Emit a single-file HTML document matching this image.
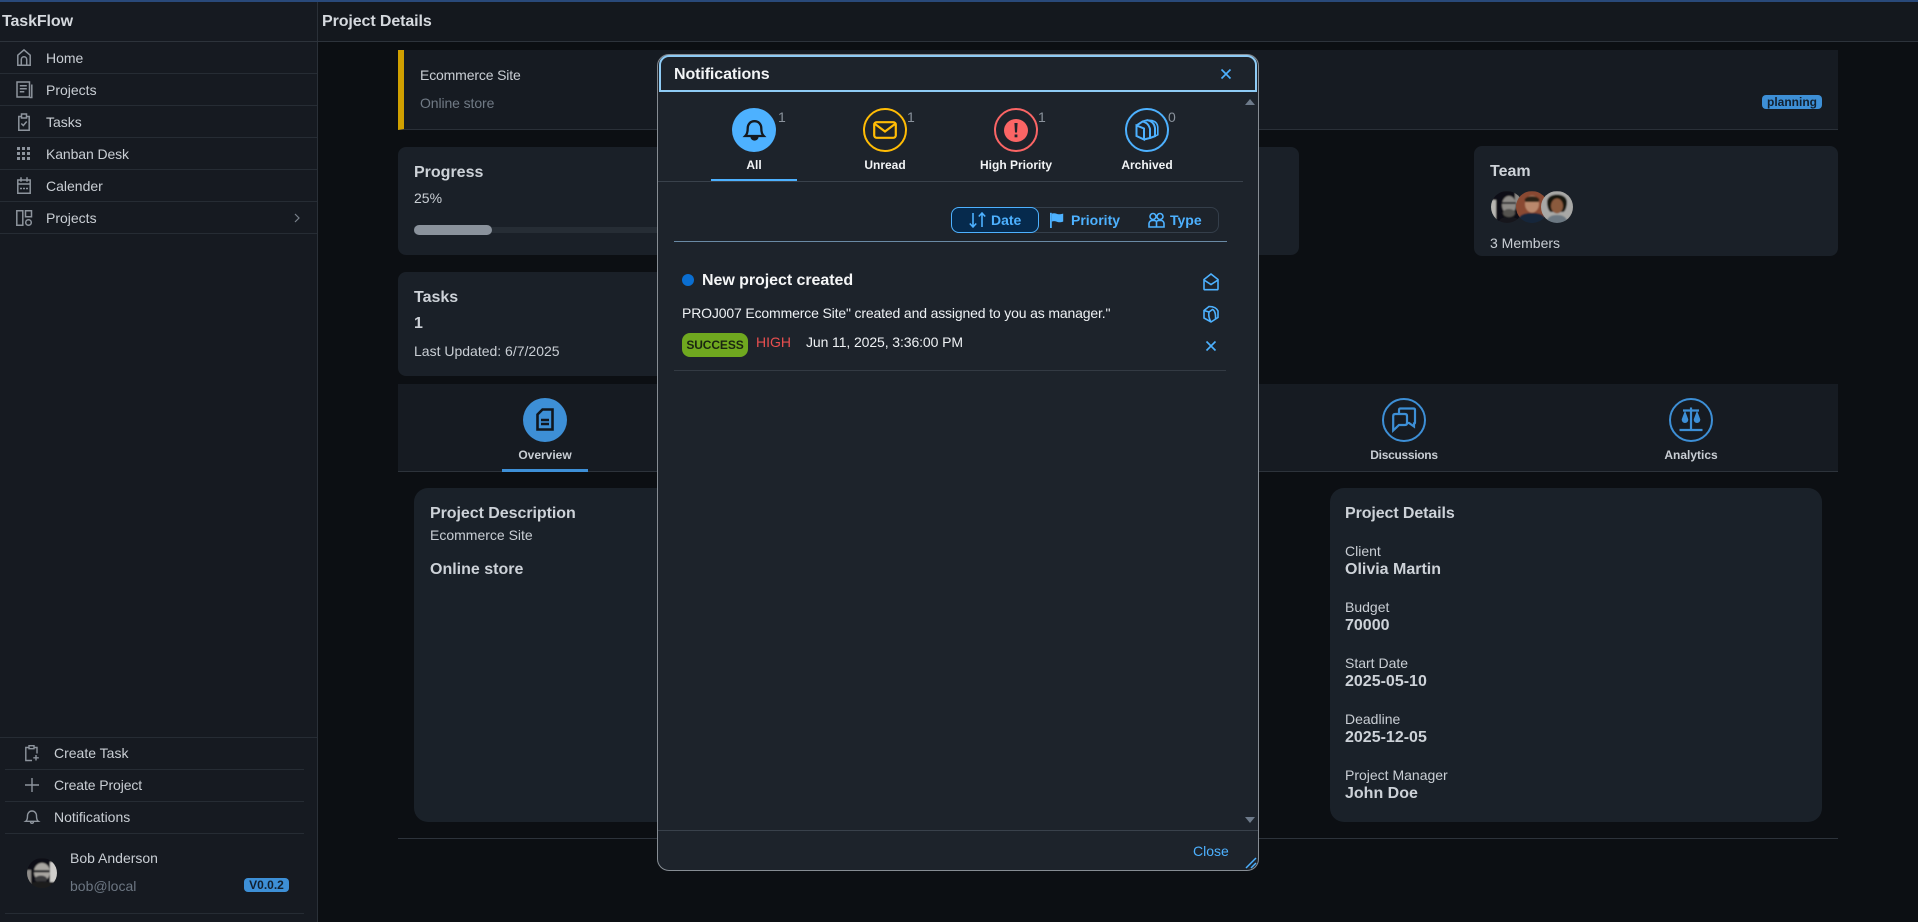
<!DOCTYPE html>
<html><head><meta charset="utf-8"><title>Project Details</title>
<style>
html,body{margin:0;padding:0;width:1918px;height:922px;overflow:hidden;background:#0c0f13}
body{position:relative;font-family:"Liberation Sans",sans-serif;font-size:14px;color:#c9ced4}
.r{position:absolute;box-sizing:border-box}
.t{position:absolute;white-space:nowrap;line-height:20px;height:20px}
.b{font-weight:700}
.h{font-size:16px;font-weight:700;color:#cdd2d8}
.w{color:#f2f4f6}
svg.i{position:absolute;overflow:visible;fill:none}
.c{transform:translateX(-50%)}
.s{font-size:12px;font-weight:700;text-align:center}
</style></head><body>

<!-- sidebar & header -->
<div class="r" style="left:0;top:0;width:317px;height:922px;background:#161a21"></div>
<div class="r" style="left:317px;top:0;width:1px;height:922px;background:#2a3038"></div>
<div class="r" style="left:318px;top:0;width:1600px;height:41px;background:#14181e"></div>
<div class="r" style="left:0;top:0;width:1918px;height:2px;background:#29497a"></div>
<div class="r" style="left:0;top:41px;width:1918px;height:1px;background:#2d333b"></div>
<div class="t h" style="left:2px;top:12px;color:#d5d9de;letter-spacing:-.1px">TaskFlow</div>
<div class="t h" style="left:322px;top:12px;color:#d5d9de;letter-spacing:-.1px">Project Details</div>

<div class="r" style="left:0;top:73px;width:317px;height:1px;background:#262c34"></div>
<div class="r" style="left:0;top:105px;width:317px;height:1px;background:#262c34"></div>
<div class="r" style="left:0;top:137px;width:317px;height:1px;background:#262c34"></div>
<div class="r" style="left:0;top:169px;width:317px;height:1px;background:#262c34"></div>
<div class="r" style="left:0;top:201px;width:317px;height:1px;background:#262c34"></div>
<div class="r" style="left:0;top:233px;width:317px;height:1px;background:#262c34"></div>

<div class="t" style="left:46px;top:48px">Home</div>
<div class="t" style="left:46px;top:80px">Projects</div>
<div class="t" style="left:46px;top:112px">Tasks</div>
<div class="t" style="left:46px;top:144px;letter-spacing:-.1px">Kanban Desk</div>
<div class="t" style="left:46px;top:176px">Calender</div>
<div class="t" style="left:46px;top:208px">Projects</div>

<svg class="i" style="left:17px;top:49px" width="14" height="17" viewBox="0 0 14 17" stroke="#8d949d" stroke-width="1.500"><path d="M.8 16.200V6.200L7 .9l6.200 5.300v10zM4.300 16.200V10.500a2.700 2.700 0 0 1 5.400 0v5.700"/></svg>
<svg class="i" style="left:16px;top:81px" width="17" height="17" viewBox="0 0 17 17" stroke="#8d949d" stroke-width="1.500"><path d="M1 1h12.500v15H1zM3.800 4.800h7M3.800 7.800h7M3.800 10.800h4.500M15.800 3.500v13h-2.300"/></svg>
<svg class="i" style="left:18px;top:113px" width="12" height="18" viewBox="0 0 12 18" stroke="#8d949d" stroke-width="1.500"><path d="M3.500 3.500H.8v13.700h10.400V3.500H8.500M3.500 1h5v4h-5zM3.300 10.500l2 2 3.400-4"/></svg>
<svg class="i" style="left:16px;top:146px" width="16" height="16" viewBox="0 0 16 16"><g fill="#8d949d"><rect x="1" y="1" width="3" height="3"/><rect x="6" y="1" width="3" height="3"/><rect x="11" y="1" width="3" height="3"/><rect x="1" y="6" width="3" height="3"/><rect x="6" y="6" width="3" height="3"/><rect x="11" y="6" width="3" height="3"/><rect x="1" y="11" width="3" height="3"/><rect x="6" y="11" width="3" height="3"/><rect x="11" y="11" width="3" height="3"/></g></svg>
<svg class="i" style="left:17px;top:177px" width="14" height="17" viewBox="0 0 14 17" stroke="#8d949d" stroke-width="1.500"><path d="M.8 3h12.400v13.200H.8zM.8 7h12.400M4 .3v4.500M10 .3v4.500M3 11.500h2M6 11.500h2M9 11.500h2"/></svg>
<svg class="i" style="left:16px;top:210px" width="16" height="16" viewBox="0 0 16 16" stroke="#8d949d" stroke-width="1.500"><path d="M.8.8h6v14.500h-6zM9.500.8h6v6h-6z"/><circle cx="12.500" cy="12.500" r="2.800"/></svg>
<svg class="i" style="left:293px;top:213px" width="8" height="10" viewBox="0 0 8 10" stroke="#7a828c" stroke-width="1.200"><path d="M2 1l4 4-4 4"/></svg>

<div class="r" style="left:0;top:737px;width:317px;height:1px;background:#262c34"></div>
<div class="r" style="left:5px;top:769px;width:299px;height:1px;background:#262c34"></div>
<div class="r" style="left:5px;top:801px;width:299px;height:1px;background:#262c34"></div>
<div class="r" style="left:5px;top:833px;width:299px;height:1px;background:#262c34"></div>
<div class="r" style="left:5px;top:913px;width:299px;height:1px;background:#262c34"></div>
<div class="t" style="left:54px;top:743px">Create Task</div>
<div class="t" style="left:54px;top:775px;letter-spacing:-.1px">Create Project</div>
<div class="t" style="left:54px;top:807px">Notifications</div>
<svg class="i" style="left:25px;top:745px" width="15" height="16" viewBox="0 0 15 16" stroke="#8d949d" stroke-width="1.400"><path d="M4 2.500H.8v13H7M9 2.500h3v6M4 .7h5v3H4zM11 10v5.500M8.300 12.800h5.500"/></svg>
<svg class="i" style="left:25px;top:778px" width="14" height="14" viewBox="0 0 14 14" stroke="#8d949d" stroke-width="1.400"><path d="M7 0v14M0 7h14"/></svg>
<svg class="i" style="left:25px;top:810px" width="14" height="14" viewBox="0 0 14 14" stroke="#8d949d" stroke-width="1.400"><path d="M.7 11.300h12.600c-1.500-1-1.800-2.500-1.800-5.300 0-3-2-5-4.500-5s-4.500 2-4.500 5c0 2.800-.3 4.300-1.800 5.300zM5.500 11.800c.2 2 2.800 2 3 0"/></svg>
<svg class="i" style="left:27px;top:858px" width="30" height="30" viewBox="0 0 30 30"><defs><clipPath id="av"><circle cx="15" cy="15" r="15"/></clipPath><filter id="bl" x="-10%" y="-10%" width="120%" height="120%"><feGaussianBlur stdDeviation=".7"/></filter></defs><g clip-path="url(#av)"><g filter="url(#bl)"><rect width="30" height="30" fill="#101114"/><rect x="23" y="4" width="8" height="20" fill="#d0cfcc"/><rect x="-1" y="12" width="5" height="18" fill="#8f8d8a"/><ellipse cx="15" cy="14" rx="8" ry="9" fill="#a9a6a1"/><rect x="7" y="12" width="16" height="2.500" fill="#26262a"/><ellipse cx="14" cy="21" rx="6" ry="3.500" fill="#3a3a3d"/><path d="M1 31c2-6 8-8 14-8s11 3 13 8z" fill="#1a1b1e"/></g></g></svg>
<div class="t" style="left:70px;top:848px">Bob Anderson</div>
<div class="t" style="left:70px;top:876px;color:#6c7682">bob@local</div>
<div class="r" style="left:244px;top:878px;width:45px;height:14px;background:#3d8fd6;border-radius:4px;color:#12202f;font-size:12px;font-weight:700;line-height:14px;text-align:center">V0.0.2</div>

<!-- main content -->
<div class="r" style="left:398px;top:50px;width:1440px;height:80px;background:#161b22;border-left:6px solid #d0a000;border-bottom:1px solid #2a3038"></div>
<div class="t" style="left:420px;top:65px;letter-spacing:-.15px">Ecommerce Site</div>
<div class="t" style="left:420px;top:93px;color:#707a85;letter-spacing:-.1px">Online store</div>
<div class="r" style="left:1762px;top:95px;width:60px;height:14px;background:#3d8fd6;border-radius:4px;color:#12202f;font-size:12px;font-weight:700;line-height:14px;text-align:center">planning</div>

<div class="r" style="left:398px;top:147px;width:901px;height:108px;background:#1a2028;border-radius:8px"></div>
<div class="t h" style="left:414px;top:163px">Progress</div>
<div class="t" style="left:414px;top:188px">25%</div>
<div class="r" style="left:414px;top:227px;width:700px;height:6px;background:#262d35"></div>
<div class="r" style="left:414px;top:225px;width:78px;height:10px;background:#8a929c;border-radius:5px"></div>

<div class="r" style="left:1474px;top:146px;width:364px;height:110px;background:#1a2028;border-radius:8px"></div>
<div class="t h" style="left:1490px;top:162px">Team</div>
<svg class="i" style="left:1491px;top:191px" width="84" height="32" viewBox="0 0 84 32"><defs><clipPath id="a1"><circle cx="16" cy="16" r="16"/></clipPath><clipPath id="a2"><circle cx="41" cy="16" r="16"/></clipPath><clipPath id="a3"><circle cx="66" cy="16" r="16"/></clipPath><filter id="b2" x="-5%" y="-5%" width="110%" height="110%"><feGaussianBlur stdDeviation=".7"/></filter></defs>
<g clip-path="url(#a1)"><g filter="url(#b2)"><rect width="34" height="32" fill="#0e0f12"/><rect x="-1" y="9" width="6" height="20" fill="#b8b6b2"/><rect x="24" y="0" width="10" height="13" fill="#8a8784"/><ellipse cx="18" cy="14" rx="7" ry="9" fill="#8d8a86"/><rect x="11" y="11" width="14" height="2" fill="#2a2a2d"/><ellipse cx="18" cy="22" rx="6" ry="4" fill="#55534f"/><path d="M6 33c2-5 6-7 12-7s10 2 12 7z" fill="#19191c"/></g></g>
<g clip-path="url(#a2)"><g filter="url(#b2)"><rect x="24" width="34" height="32" fill="#8a4a30"/><ellipse cx="41" cy="13" rx="7" ry="8.500" fill="#b9886c"/><path d="M33.500 9c1-5 14-5 15 0l-1 2h-13z" fill="#2a2018"/><path d="M26 33c1-9 6-11 15-11s14 2 15 11z" fill="#15263a"/></g></g>
<g clip-path="url(#a3)"><g filter="url(#b2)"><rect x="49" width="34" height="32" fill="#a8a8a6"/><path d="M56 11c0-10 20-10 20 0 0 5-2 10-4 10H60c-2 0-4-5-4-10z" fill="#17120e"/><ellipse cx="66" cy="15" rx="6" ry="7.500" fill="#8a5a3c"/><path d="M55 33c1-7 5-9 11-9s10 2 11 9z" fill="#6c7882"/></g></g></svg>
<div class="t" style="left:1490px;top:233px">3 Members</div>

<div class="r" style="left:398px;top:272px;width:860px;height:104px;background:#1a2028;border-radius:8px"></div>
<div class="t h" style="left:414px;top:288px">Tasks</div>
<div class="t h" style="left:414px;top:314px">1</div>
<div class="t" style="left:414px;top:341px">Last Updated: 6/7/2025</div>

<div class="r" style="left:398px;top:384px;width:1440px;height:88px;background:#161b22;border-bottom:1px solid #2d333b"></div>
<div class="r" style="left:523px;top:398px;width:44px;height:44px;border-radius:50%;background:#3d8fd6"></div>
<svg class="i" style="left:536px;top:408px" width="18" height="23" viewBox="0 0 18 23" stroke="#10161d" stroke-width="2.600"><path d="M6.500 1.500h10v20H1.500V6.500zM5 12h8M5 16h8"/></svg>
<div class="t s c" style="left:545px;top:445px">Overview</div>
<div class="r" style="left:502px;top:469px;width:86px;height:3px;background:#3d8fd6"></div>

<div class="r" style="left:1382px;top:398px;width:44px;height:44px;border-radius:50%;border:2px solid #3d8fd6"></div>
<svg class="i" style="left:1392px;top:407px" width="25" height="25" viewBox="0 0 25 25" stroke="#3d8fd6" stroke-width="2.200"><path d="M7 6V3q0-1.500 1.500-1.500h13q1.500 0 1.500 1.500v12.500q0 1-1 1v3l-5-3.500H14M1.200 9q0-2 2-2H13q2 0 2 2v7q0 2-2 2H7l-5.800 5.500z"/></svg>
<div class="t s c" style="left:1404px;top:445px;letter-spacing:-.3px">Discussions</div>
<div class="r" style="left:1669px;top:398px;width:44px;height:44px;border-radius:50%;border:2px solid #3d8fd6"></div>
<svg class="i" style="left:1679px;top:407px" width="24" height="24" viewBox="0 0 24 24" stroke="#3d8fd6" stroke-width="2"><path d="M12 .5v22M.5 23h23M4 3.500h16" stroke-width="2.200"/><path d="M6 5L3.200 12.500c0 4 5.600 4 5.600 0zM18 5l-2.800 7.500c0 4 5.600 4 5.600 0z" fill="#3d8fd6" stroke-width="1"/></svg>
<div class="t s c" style="left:1691px;top:445px">Analytics</div>

<div class="r" style="left:414px;top:488px;width:844px;height:334px;background:#1a2129;border-radius:14px"></div>
<div class="t h" style="left:430px;top:504px;letter-spacing:-.05px">Project Description</div>
<div class="t" style="left:430px;top:525px">Ecommerce Site</div>
<div class="t h" style="left:430px;top:560px">Online store</div>

<div class="r" style="left:1330px;top:488px;width:492px;height:334px;background:#1a2129;border-radius:14px"></div>
<div class="t h" style="left:1345px;top:504px;letter-spacing:-.1px">Project Details</div>
<div class="t" style="left:1345px;top:541px">Client</div><div class="t h" style="left:1345px;top:560px">Olivia Martin</div>
<div class="t" style="left:1345px;top:597px">Budget</div><div class="t h" style="left:1345px;top:616px">70000</div>
<div class="t" style="left:1345px;top:653px">Start Date</div><div class="t h" style="left:1345px;top:672px">2025-05-10</div>
<div class="t" style="left:1345px;top:709px">Deadline</div><div class="t h" style="left:1345px;top:728px">2025-12-05</div>
<div class="t" style="left:1345px;top:765px">Project Manager</div><div class="t h" style="left:1345px;top:784px">John Doe</div>
<div class="r" style="left:398px;top:838px;width:1440px;height:1px;background:#2d333b"></div>

<!-- modal -->
<div class="r" style="left:657px;top:54px;width:602px;height:817px;background:#1d232b;border:1px solid #878d94;border-radius:12px"></div>
<div class="r" style="left:659px;top:55px;width:598px;height:37px;background:#1d232b;border:2px solid #8ecbf5;border-radius:10px 10px 0 0"></div>
<div class="t" style="left:674px;top:65px;font-size:16px;font-weight:700;color:#f2f4f6;letter-spacing:-.1px">Notifications</div>
<svg class="i" style="left:1220px;top:68px" width="12" height="12" viewBox="0 0 12 12" stroke="#4db1ff" stroke-width="1.600"><path d="M1.500 1.500l9 9M10.500 1.500l-9 9"/></svg>
<svg class="i" style="left:1245px;top:99px" width="10" height="6" viewBox="0 0 10 6"><path d="M5 0l5 6H0z" fill="#6d7a8a"/></svg>
<svg class="i" style="left:1245px;top:817px" width="10" height="6" viewBox="0 0 10 6"><path d="M5 6L0 0h10z" fill="#6d7a8a"/></svg>

<div class="r" style="left:732px;top:108px;width:44px;height:44px;border-radius:50%;background:#4db1ff"></div>
<svg class="i" style="left:744px;top:120px" width="21" height="21" viewBox="0 0 21 21" stroke="#14191f" stroke-width="2.300"><path d="M1.300 16h18.400c-2-2-2.400-4-2.400-7.500C17.300 4 14.500 1.200 10.500 1.200S3.700 4 3.700 8.500C3.700 12 3.300 14 1.300 16z"/><path d="M7.500 17c.5 3.300 5.500 3.300 6 0" fill="#14191f"/></svg>
<div class="t" style="left:778px;top:107px;color:#8a929c">1</div>
<div class="t s w c" style="left:754px;top:155px">All</div>
<div class="r" style="left:711px;top:179px;width:86px;height:3px;background:#4db1ff"></div>

<div class="r" style="left:863px;top:108px;width:44px;height:44px;border-radius:50%;border:2px solid #ffbc05"></div>
<svg class="i" style="left:873px;top:121px" width="24" height="18" viewBox="0 0 24 18" stroke="#ffbc05" stroke-width="2.200"><rect x="1.200" y="1.200" width="21.600" height="15.600" rx="2.500"/><path d="M2 3l10 7.500L22 3"/></svg>
<div class="t" style="left:907px;top:107px;color:#8a929c">1</div>
<div class="t s w c" style="left:885px;top:155px">Unread</div>

<div class="r" style="left:994px;top:108px;width:44px;height:44px;border-radius:50%;border:2px solid #fb6565"></div>
<div class="r" style="left:1004px;top:119px;width:24px;height:23px;border-radius:50%;background:#fb6565"></div>
<svg class="i" style="left:1014px;top:123px" width="4" height="15" viewBox="0 0 4 15"><path d="M.4 0h3.200L3 9.500H1z" fill="#1d232b"/><rect x=".6" y="11.500" width="2.800" height="2.800" fill="#1d232b"/></svg>
<div class="t" style="left:1038px;top:107px;color:#8a929c">1</div>
<div class="t s w c" style="left:1016px;top:155px">High Priority</div>

<div class="r" style="left:1125px;top:108px;width:44px;height:44px;border-radius:50%;border:2px solid #4db1ff"></div>
<svg class="i" style="left:1135px;top:119px" width="24" height="22" viewBox="0 0 24 22" stroke="#4db1ff" stroke-width="2"><path d="M1.500 6.500L9 9.500V20.500L1.500 17zM1.500 6.500L7.500 2.500Q13.500 3.500 15 10V19L9 20.500M7.500 2.500L12.500 1.200Q19 2.500 20 9V17.200L15 19"/><path d="M12.500 1.200L17 1.500Q22.300 3 22.800 8V15.800L20 17.200" stroke-width="1.600"/></svg>
<div class="t" style="left:1168px;top:107px;color:#8a929c">0</div>
<div class="t s w c" style="left:1147px;top:155px">Archived</div>

<div class="r" style="left:658px;top:181px;width:585px;height:1px;background:#39414b"></div>

<div class="r" style="left:951px;top:207px;width:268px;height:26px;border:1px solid #343e4a;border-radius:8px"></div>
<div class="r" style="left:951px;top:207px;width:88px;height:26px;background:#062a4d;border:1px solid #4db1ff;border-radius:8px"></div>
<svg class="i" style="left:969px;top:212px" width="17" height="16" viewBox="0 0 17 16" stroke="#4db1ff" stroke-width="1.600"><path d="M4 1v14M.8 11.500L4 15l3.200-3.500M13 15V1M9.800 4.500L13 1l3.200 3.500"/></svg>
<div class="t b" style="left:991px;top:210px;color:#4db1ff">Date</div>
<svg class="i" style="left:1050px;top:212px" width="14" height="16" viewBox="0 0 14 20" preserveAspectRatio="none"><path d="M0 1h1.800v19H0z" fill="#4db1ff"/><path d="M1.800 2c3-1.500 5.500 1 7 .8 1.500 0 3-.4 4.400-.8v10c-1.500.5-3 1-4.500.8-1.800-.2-4-2.300-6.900-.8z" fill="#4db1ff"/></svg>
<div class="t b" style="left:1071px;top:210px;color:#4db1ff">Priority</div>
<svg class="i" style="left:1148px;top:212px" width="17" height="16" viewBox="0 0 17 16" stroke="#4db1ff" stroke-width="1.600"><circle cx="5" cy="4.500" r="3"/><circle cx="12" cy="4.500" r="3"/><path d="M1 15v-3.500A3.500 3.500 0 0 1 4 8.500h2.500a3 3 0 0 1 2 1 3 3 0 0 1 2-1H13a3 3 0 0 1 3 3V15zM8.500 9.500V15"/></svg>
<div class="t b" style="left:1170px;top:210px;color:#4db1ff">Type</div>
<div class="r" style="left:674px;top:241px;width:553px;height:1px;background:#6a8aa5"></div>

<div class="r" style="left:682px;top:274px;width:12px;height:12px;border-radius:50%;background:#0a6ed1"></div>
<div class="t" style="left:702px;top:271px;font-size:16px;font-weight:700;color:#f5f6f7;letter-spacing:-.05px">New project created</div>
<div class="t" style="left:682px;top:303px;color:#eef1f4;letter-spacing:-.15px">PROJ007 Ecommerce Site" created and assigned to you as manager."</div>
<div class="r" style="left:682px;top:333px;width:66px;height:24px;background:#6fa81f;border-radius:8px;color:#1a2510;font-size:12px;font-weight:700;line-height:24px;text-align:center;letter-spacing:-.1px">SUCCESS</div>
<div class="t" style="left:756px;top:332px;color:#e84f4f">HIGH</div>
<div class="t" style="left:806px;top:332px;color:#eef1f4;letter-spacing:-.1px">Jun 11, 2025, 3:36:00 PM</div>
<svg class="i" style="left:1203px;top:273px" width="16" height="18" viewBox="0 0 16 18" stroke="#4db1ff" stroke-width="1.600"><path d="M1 6.500l7-5.500 7 5.500v9.200q0 1-1 1H2q-1 0-1-1zM1 7l7 4.500L15 7"/></svg>
<svg class="i" style="left:1203px;top:305px" width="16" height="18" viewBox="0 0 16 18" stroke="#4db1ff" stroke-width="1.600"><path d="M1 5.500L6 1.500Q13 1.500 15 6V12.500L8 17 1 13zM8 17Q5 12 6 7L1 5.500M6 7L9.500 4.500Q13 6 12.500 14.500"/></svg>
<svg class="i" style="left:1205px;top:340px" width="12" height="12" viewBox="0 0 12 12" stroke="#4db1ff" stroke-width="1.600"><path d="M1.500 1.500l9 9M10.500 1.500l-9 9"/></svg>
<div class="r" style="left:674px;top:370px;width:552px;height:1px;background:#333a43"></div>

<div class="r" style="left:658px;top:830px;width:600px;height:1px;background:#39414b"></div>
<div class="t" style="left:1193px;top:841px;color:#4db1ff">Close</div>
<svg class="i" style="left:1245px;top:857px" width="12" height="12" viewBox="0 0 12 12" stroke="#4db1ff" stroke-width="1.500"><path d="M1 11L11 1M6 11l5-5"/></svg>

</body></html>
